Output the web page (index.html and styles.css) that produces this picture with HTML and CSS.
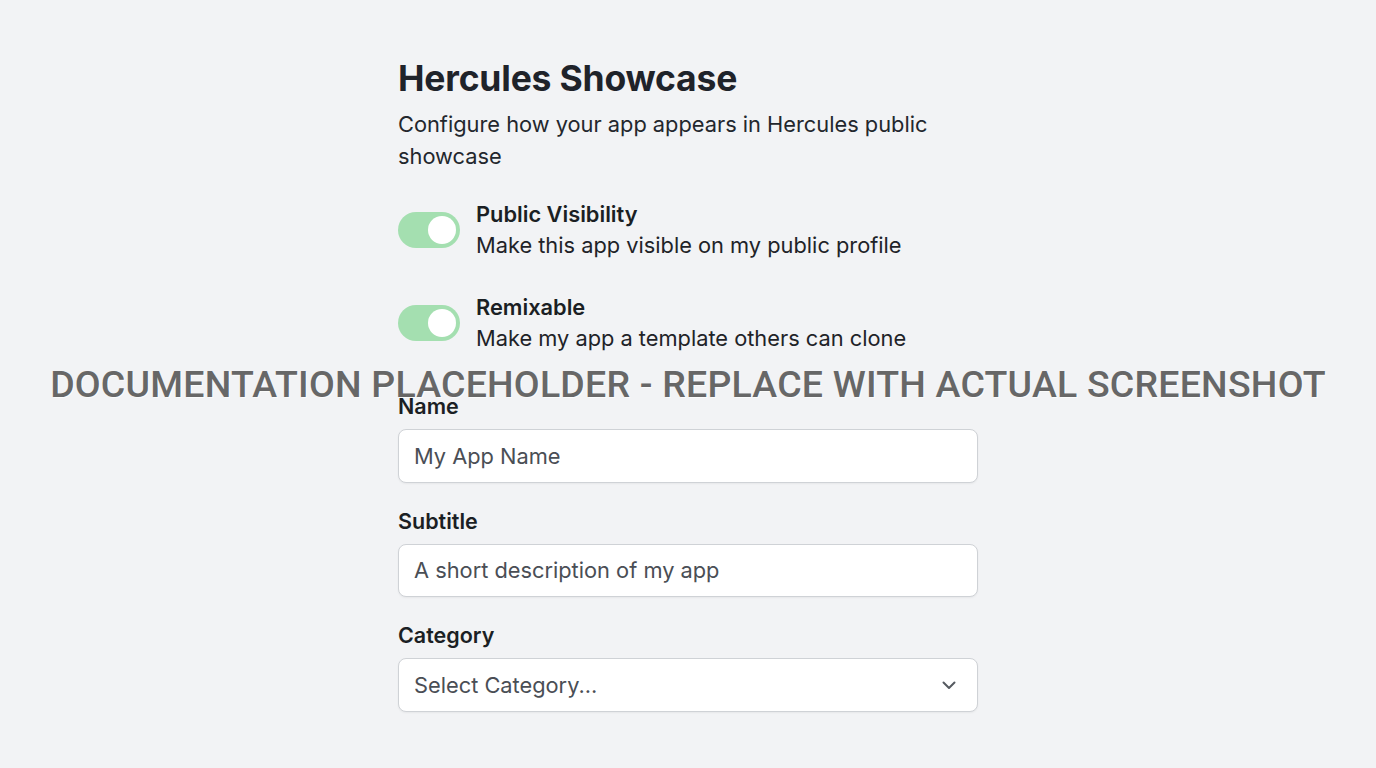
FILE: index.html
```html
<!DOCTYPE html>
<html lang="en">
<head>
<meta charset="utf-8">
<title>Hercules Showcase</title>
<link rel="stylesheet" href="styles.css">
</head>
<body>
<div class="page">
  <div class="panel">
    <h1 class="title">Hercules Showcase</h1>
    <p class="intro">Configure how your app appears in Hercules public showcase</p>

    <div class="toggles">
      <div class="toggle-row">
        <span class="switch"><span class="knob"></span></span>
        <div class="toggle-text">
          <div class="toggle-label">Public Visibility</div>
          <div class="toggle-desc">Make this app visible on my public profile</div>
        </div>
      </div>
      <div class="toggle-row">
        <span class="switch"><span class="knob"></span></span>
        <div class="toggle-text">
          <div class="toggle-label">Remixable</div>
          <div class="toggle-desc">Make my app a template others can clone</div>
        </div>
      </div>
    </div>

    <div class="fields">
      <div class="field">
        <label class="field-label">Name</label>
        <div class="input"><span class="placeholder">My App Name</span></div>
      </div>
      <div class="field">
        <label class="field-label">Subtitle</label>
        <div class="input"><span class="placeholder">A short description of my app</span></div>
      </div>
      <div class="field">
        <label class="field-label">Category</label>
        <div class="input select">
          <span class="placeholder">Select Category...</span>
          <svg class="chevron" width="18" height="18" viewBox="0 0 18 18" fill="none"><path d="M3.5 6.5 L9 12 L14.5 6.5" stroke="#555a60" stroke-width="2" stroke-linecap="round" stroke-linejoin="round"/></svg>
        </div>
      </div>
    </div>
  </div>
  <div class="overlay">DOCUMENTATION PLACEHOLDER - REPLACE WITH ACTUAL SCREENSHOT</div>
</div>
</body>
</html>
```
FILE: styles.css
```css
* { box-sizing: border-box; }
html, body { margin: 0; padding: 0; }
body {
  background: #f2f3f5;
  font-family: Inter, "Noto Sans", sans-serif;
  color: #1d2127;
}
.page {
  position: relative;
  width: 1376px;
  height: 768px;
  overflow: hidden;
  padding: 57px 0 0 398px;
}
.panel {
  width: 580px;
  display: flex;
  flex-direction: column;
}
.title {
  margin: 0;
  font-size: 35.5px;
  line-height: 44px;
  font-weight: 700;
  color: #1f232a;
  letter-spacing: -0.2px;
}
.intro {
  margin: 7px 0 0;
  font-size: 21.8px;
  line-height: 32px;
  color: #23272d;
  width: 545px;
}
.toggles {
  margin-top: 27px;
  display: flex;
  flex-direction: column;
  gap: 31px;
}
.toggle-row {
  display: flex;
  align-items: center;
  gap: 16px;
}
.switch {
  position: relative;
  flex: 0 0 62px;
  width: 62px;
  height: 36px;
  border-radius: 18px;
  background: #a4dfb0;
}
.knob {
  position: absolute;
  right: 4px;
  top: 4px;
  width: 28px;
  height: 28px;
  border-radius: 50%;
  background: #ffffff;
}
.toggle-label {
  font-size: 21.8px;
  line-height: 30px;
  font-weight: 600;
  color: #1b1f24;
}
.toggle-desc {
  font-size: 21.8px;
  line-height: 32px;
  color: #1f2328;
}
.fields {
  margin-top: 37px;
  display: flex;
  flex-direction: column;
  gap: 23px;
}
.field {
  display: flex;
  flex-direction: column;
  gap: 8px;
}
.field-label {
  font-size: 21.5px;
  line-height: 30px;
  font-weight: 600;
  color: #1b1f24;
}
.input {
  height: 53.5px;
  background: #ffffff;
  border: 1.5px solid #cfd2d6;
  border-radius: 8px;
  display: flex;
  align-items: center;
  padding: 0 15px;
  box-shadow: 0 1px 2px rgba(0,0,0,0.05);
}
.select { justify-content: space-between; padding-right: 19px; }
.placeholder {
  font-size: 21.8px;
  color: #4a4e55;
}
.chevron { display: block; }
.overlay {
  position: absolute;
  left: 0;
  right: 0;
  top: 361px;
  text-align: center;
  font-family: Roboto, "Liberation Sans", sans-serif;
  font-size: 37.5px;
  font-weight: 500;
  line-height: 46px;
  color: #676767;
  text-shadow: 1px 1px 0 rgba(255,255,255,0.7);
  letter-spacing: 0.2px;
}
```
